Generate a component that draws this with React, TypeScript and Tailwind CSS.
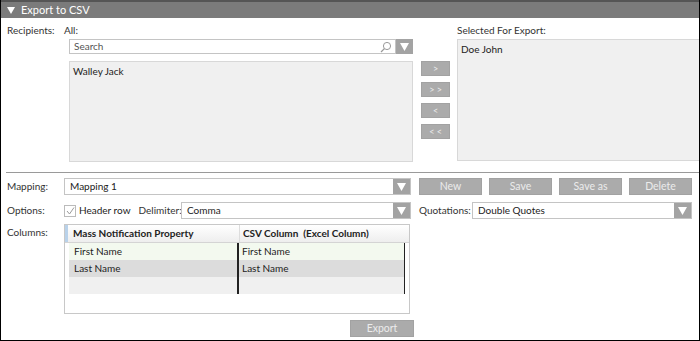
import React from 'react';

const font = { fontFamily: 'Lato, "Open Sans", sans-serif' };

function GrayButton({ label, className = '' }: { label: string; className?: string }) {
  return (
    <div
      className={`flex items-center justify-center shrink-0 bg-[#ababab] border border-[#a2a2a2] text-[#ececec] leading-none ${className}`}
    >
      {label}
    </div>
  );
}

function Arrow() {
  return (
    <div className="flex items-center justify-center w-[17px] h-full shrink-0 bg-[#a3a3a3]">
      <svg width="9" height="8" viewBox="0 0 9 8">
        <path d="M0 0 H9 L4.5 8 Z" fill="#ffffff" />
      </svg>
    </div>
  );
}

function Select({ value, className = '' }: { value: string; className?: string }) {
  return (
    <div className={`flex items-stretch shrink-0 h-[17px] border border-[#c4c4c4] bg-white ${className}`}>
      <div className="flex-1 pl-[5px] text-[10px] leading-[15px] text-[#222]">{value}</div>
      <Arrow />
    </div>
  );
}

export default function App() {
  const moveButtons = ['>', '> >', '<', '< <'];
  const rows = [
    { a: 'First Name', b: 'First Name', bg: 'bg-[#f3f9ef]' },
    { a: 'Last Name', b: 'Last Name', bg: 'bg-[#dcdcdc]' },
    { a: '', b: '', bg: 'bg-[#f0f0f0]' },
  ];

  return (
    <div style={font} className="w-[700px] h-[341px] bg-white border-x border-b border-black flex flex-col overflow-hidden text-[#333] text-[10px] whitespace-nowrap">
      {/* title bar */}
      <div className="h-[18px] shrink-0 bg-[#7b7b7b] border-t-2 border-[#555] flex items-center pl-[6px] gap-[6px] text-white text-[11px]">
        <svg width="8" height="7" viewBox="0 0 8 7">
          <path d="M0 0 H8 L4 7 Z" fill="#ffffff" />
        </svg>
        <span>Export to CSV</span>
      </div>

      {/* recipients */}
      <div className="flex pl-[6px] pt-[5px] h-[148px] shrink-0">
        <div className="w-[57px] shrink-0 leading-[14px]">Recipients:</div>
        <div className="w-[349px] shrink-0 flex flex-col">
          <div className="leading-[14px]">All:</div>
          <div className="ml-[5px] mt-[2px] flex items-stretch h-[15px]">
            <div className="flex-1 border border-[#c4c4c4] bg-white flex items-center pl-[4px] pr-[3px] text-[#555]">
              <span className="flex-1">Search</span>
              <svg width="12" height="12" viewBox="0 0 12 12">
                <circle cx="7" cy="5" r="3.6" fill="none" stroke="#9a9a9a" strokeWidth="1" />
                <path d="M4.4 7.6 L1 11" stroke="#9a9a9a" strokeWidth="1.3" />
              </svg>
            </div>
            <Arrow />
          </div>
          <div className="ml-[5px] mt-[7px] h-[101px] bg-[#f0f0f0] border border-[#d8d8d8] pl-[3px] pt-[2px] text-[#222]">
            Walley Jack
          </div>
        </div>
        <div className="w-[29px] shrink-0 ml-[8px] mt-[38px] flex flex-col gap-[6px]">
          {moveButtons.map((b) => (
            <GrayButton key={b} label={b} className="h-[15px] text-[9px]" />
          ))}
        </div>
        <div className="flex-1 ml-[7px] flex flex-col">
          <div className="leading-[14px]">Selected For Export:</div>
          <div className="mt-[2px] h-[122px] bg-[#f0f0f0] border border-[#d8d8d8] border-r-0 pl-[3px] pt-[2px] text-[#222]">
            Doe John
          </div>
        </div>
      </div>

      {/* separator */}
      <div className="ml-[5px] mt-[6px] h-px bg-[#9a9a9a] shrink-0" />

      {/* mapping */}
      <div className="flex items-center pl-[6px] mt-[5px] h-[17px]">
        <div className="w-[57px] shrink-0">Mapping:</div>
        <Select value="Mapping 1" className="w-[347px]" />
        <div className="flex gap-[7px] ml-[8px]">
          {['New', 'Save', 'Save as', 'Delete'].map((b) => (
            <GrayButton key={b} label={b} className="w-[63px] h-[17px] text-[10.5px]" />
          ))}
        </div>
      </div>

      {/* options */}
      <div className="flex items-center pl-[6px] mt-[7px] h-[17px]">
        <div className="w-[57px] shrink-0">Options:</div>
        <div className="w-[117px] shrink-0 flex items-center">
          <div className="w-[12px] h-[12px] shrink-0 border border-[#bbb] bg-white flex items-center justify-center">
            <svg width="9" height="8" viewBox="0 0 9 8">
              <path d="M1 4 L3.5 7 L8 0.5" fill="none" stroke="#9a9a9a" strokeWidth="1" />
            </svg>
          </div>
          <span className="ml-[3px] text-[#222]">Header row</span>
          <span className="ml-[8px]">Delimiter:</span>
        </div>
        <Select value="Comma" className="w-[230px]" />
        <div className="w-[61px] shrink-0 pl-[8px]">Quotations:</div>
        <Select value="Double Quotes" className="w-[220px]" />
      </div>

      {/* columns */}
      <div className="flex pl-[6px] mt-[5px]">
        <div className="w-[57px] shrink-0 pt-[1px]">Columns:</div>
        <div className="w-[346px] h-[90px] border border-[#c8c8c8] bg-white flex flex-col">
          <div className="flex h-[18px] bg-gradient-to-b from-white to-[#eeeeee] border-b border-[#d4d4d4] font-bold text-[#222]">
            <div className="w-[3px] bg-[#b9d2ea]" />
            <div className="w-[171px] pl-[5px] leading-[17px]">Mass Notification Property</div>
            <div className="flex-1 pl-[3px] leading-[17px] border-l border-[#ddd]">CSV Column&nbsp; (Excel Column)</div>
          </div>
          {rows.map((r, i) => (
            <div key={i} className={`flex h-[17px] mx-[4px] text-[#222] ${r.bg}`}>
              <div className="w-[170px] pl-[5px] leading-[16px] border-r-2 border-[#222]">{r.a}</div>
              <div className="flex-1 pl-[3px] leading-[16px] border-r border-[#222]">{r.b}</div>
            </div>
          ))}
        </div>
      </div>

      {/* export */}
      <div className="flex pl-[349px] mt-[6px]">
        <GrayButton label="Export" className="w-[64px] h-[17px] text-[10.5px]" />
      </div>
    </div>
  );
}
